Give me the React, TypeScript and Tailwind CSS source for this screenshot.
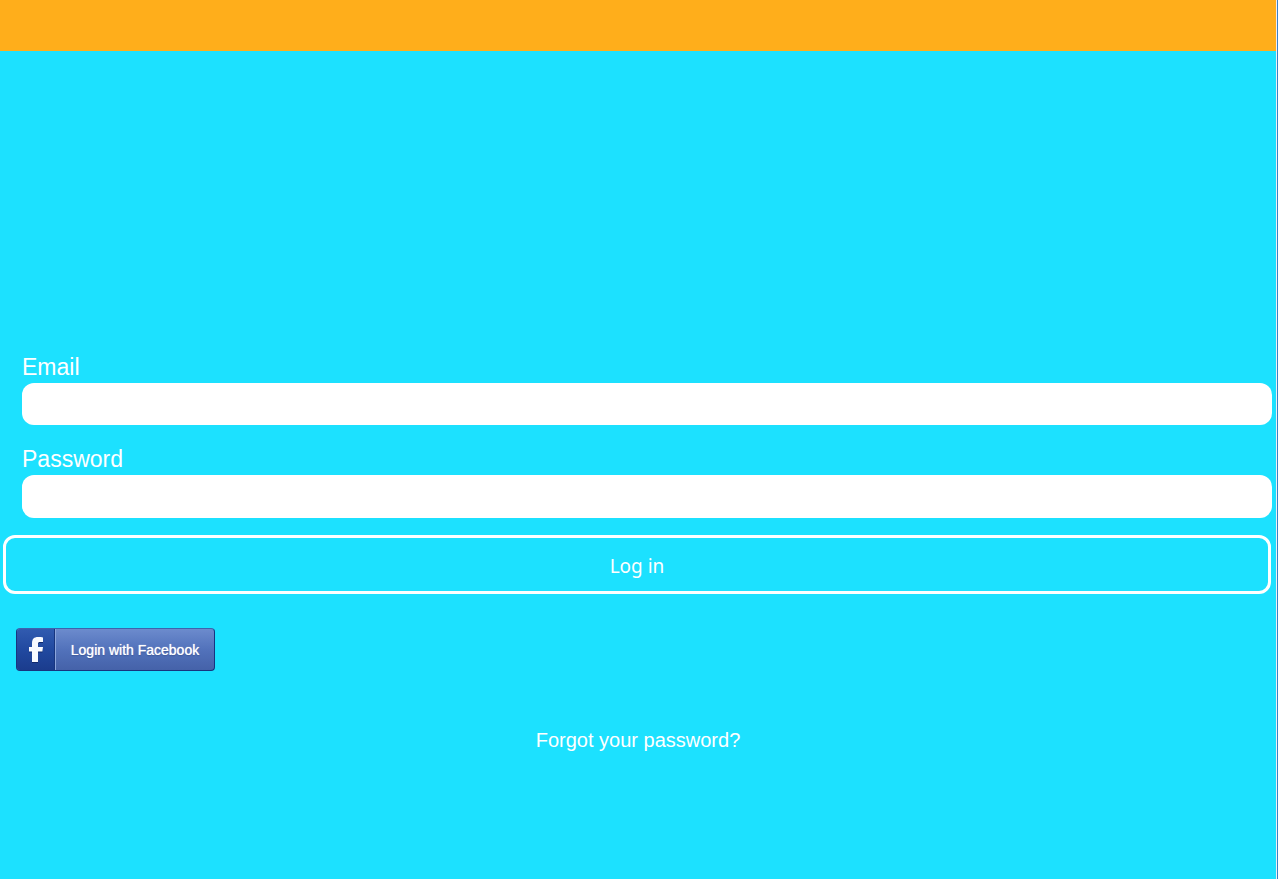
export default function App() {
  return (
    <div className="flex min-h-screen flex-col border-r border-[#3b82c4] bg-[#1ce1ff] font-['Liberation_Sans',Arial,sans-serif] text-white">
      <div className="flex grow flex-col border-r border-[#f4eef4]">
        <header className="h-[51px] bg-[#ffae1b]" />
        <main className="flex flex-col pt-[302px]">
          <form className="flex flex-col" onSubmit={(e) => e.preventDefault()}>
            <div className="flex flex-col gap-4 pl-[22px] pr-1">
              <div className="flex flex-col">
                <label htmlFor="email" className="h-[30px] text-[23px] leading-[28px]">
                  Email
                </label>
                <input
                  id="email"
                  type="email"
                  className="h-[42px] w-full rounded-xl bg-white px-3 text-xl text-gray-900"
                />
              </div>
              <div className="flex flex-col pt-1">
                <label htmlFor="password" className="h-[30px] text-[23px] leading-[28px]">
                  Password
                </label>
                <input
                  id="password"
                  type="password"
                  className="h-[43px] w-full rounded-xl bg-white px-3 text-xl text-gray-900"
                />
              </div>
            </div>
            <div className="pl-[3px] pr-[5px] pt-[17px]">
              <button
                type="submit"
                className="h-[59px] w-full rounded-xl border-3 border-white pt-[3px] font-['Noto_Sans',sans-serif] text-[19px]"
              >
                Log in
              </button>
            </div>
          </form>
          <button
            type="button"
            className="ml-4 mt-[34px] flex h-[43px] w-[199px] overflow-hidden rounded-[4px] border border-[#17357f] border-t-[#3d63ae] bg-linear-to-b from-[#6c8bcd] via-[#5272bb] to-[#4562a9]"
          >
            <span className="flex h-full w-[38px] items-center justify-center border-r border-[#17357f] bg-linear-to-b from-[#315bb0] via-[#2149a0] to-[#1b3c8d]">
              <svg
                viewBox="0 0 14 25"
                className="h-[25px] w-[14px] drop-shadow-[0_1px_0_#10296b]"
                fill="#f8faff"
                aria-hidden="true"
              >
                <path d="M3 25V14.500H0V10h3V6c0-4 2-6 6-6 2 0 4 0 5 .4V5h-3C9.500 5 9 5.500 9 7v3h5l-.6 4.500H9V25z" />
              </svg>
            </span>
            <span className="flex h-full grow items-center justify-center border-l border-[#8ba5dc] font-['Liberation_Sans',Arial,sans-serif] text-sm [text-shadow:0_0_1px_#ffffff,0_1px_1px_#29478f]">
              Login with Facebook
            </span>
          </button>
          <a href="#forgot" className="mt-[56px] self-center text-xl leading-[26px]">
            Forgot your password?
          </a>
        </main>
      </div>
    </div>
  );
}
